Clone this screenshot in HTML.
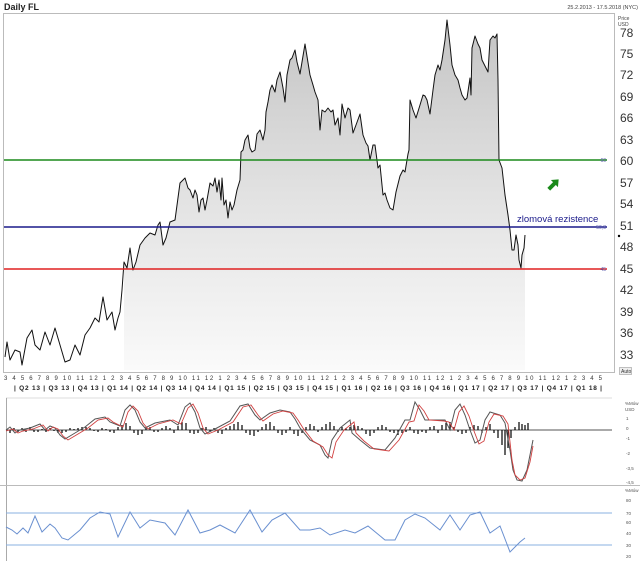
<!DOCTYPE html>
<html><head><meta charset="utf-8"><style>
body{margin:0;width:640px;height:561px;overflow:hidden;background:#fff;font-family:"Liberation Sans",sans-serif}
svg{display:block}
</style></head><body>
<svg width="640" height="561" viewBox="0 0 640 561" xmlns="http://www.w3.org/2000/svg" font-family="Liberation Sans, sans-serif">
<defs>
<linearGradient id="g" x1="0" y1="0" x2="0" y2="1">
<stop offset="0" stop-color="#c4c4c4"/><stop offset="0.5" stop-color="#e2e2e2"/><stop offset="1" stop-color="#fafafa"/>
</linearGradient>
</defs>
<text x="4" y="10" font-size="9" font-weight="bold" fill="#222">Daily FL</text>
<text x="638" y="9" font-size="5.5" fill="#444" text-anchor="end">25.2.2013 - 17.5.2018 (NYC)</text>
<rect x="3.5" y="13.5" width="611" height="359" fill="none" stroke="#bbb"/>
<polygon fill="url(#g)" points="124,262 127,268 130,248 133,270 136,262 140,245 145,238 150,233 155,235 158,225 160,222 163,245 166,238 170,222 175,220 180,183 183,180 185,178 188,188 190,190 193,198 195,190 197,195 199,212 201,200 203,198 205,210 207,200 210,183 213,186 215,178 217,192 219,180 221,200 222,178 224,205 226,200 228,218 230,202 232,210 234,205 237,190 240,180 241,152 243,150 245,140 248,135 250,148 252,152 255,150 257,134 260,130 263,140 265,130 266,112 268,102 270,90 272,85 275,92 277,80 280,72 283,88 285,102 287,75 290,60 292,58 295,50 297,62 300,74 305,44 310,75 313,85 315,92 318,100 320,130 322,110 325,112 328,108 331,112 333,110 335,125 338,118 340,135 342,104 345,118 348,108 350,110 353,133 356,125 360,114 363,135 366,143 368,146 370,160 373,145 375,145 378,168 380,165 383,195 385,193 387,200 390,208 393,210 396,192 400,176 403,170 405,172 408,154 409,150 410,100 413,110 416,118 420,105 423,95 425,96 427,100 430,114 433,90 435,75 438,65 440,70 442,60 445,40 447,20 450,45 452,65 455,75 458,80 460,88 462,95 465,100 467,98 470,78 471,95 472,48 475,36 478,44 480,48 482,60 485,66 488,72 490,40 493,36 495,38 497,34 498,80 499,160 502,168 505,195 508,215 510,230 512,250 514,250 516,235 518,245 519,260 521,268 522,255 524,248 525,235 525,370 124,370"/>
<polyline fill="none" stroke="#111" stroke-width="1" stroke-linejoin="round" points="5,357 7,342 10,360 15,350 20,352 22,365 27,338 32,330 35,345 40,350 45,332 50,345 55,328 60,345 65,362 70,360 75,345 80,355 85,335 90,328 95,318 99,322 103,297 107,320 112,312 115,330 118,318 120,312 122,290 124,262 127,268 130,248 133,270 136,262 140,245 145,238 150,233 155,235 158,225 160,222 163,245 166,238 170,222 175,220 180,183 183,180 185,178 188,188 190,190 193,198 195,190 197,195 199,212 201,200 203,198 205,210 207,200 210,183 213,186 215,178 217,192 219,180 221,200 222,178 224,205 226,200 228,218 230,202 232,210 234,205 237,190 240,180 241,152 243,150 245,140 248,135 250,148 252,152 255,150 257,134 260,130 263,140 265,130 266,112 268,102 270,90 272,85 275,92 277,80 280,72 283,88 285,102 287,75 290,60 292,58 295,50 297,62 300,74 305,44 310,75 313,85 315,92 318,100 320,130 322,110 325,112 328,108 331,112 333,110 335,125 338,118 340,135 342,104 345,118 348,108 350,110 353,133 356,125 360,114 363,135 366,143 368,146 370,160 373,145 375,145 378,168 380,165 383,195 385,193 387,200 390,208 393,210 396,192 400,176 403,170 405,172 408,154 409,150 410,100 413,110 416,118 420,105 423,95 425,96 427,100 430,114 433,90 435,75 438,65 440,70 442,60 445,40 447,20 450,45 452,65 455,75 458,80 460,88 462,95 465,100 467,98 470,78 471,95 472,48 475,36 478,44 480,48 482,60 485,66 488,72 490,40 493,36 495,38 497,34 498,80 499,160 502,168 505,195 508,215 510,230 512,250 514,250 516,235 518,245 519,260 521,268 522,255 524,248 525,235"/>
<line x1="4" y1="160" x2="607" y2="160" stroke="#1a8a1a" stroke-width="1.5"/>
<line x1="4" y1="227" x2="607" y2="227" stroke="#1a1a8a" stroke-width="1.5"/>
<line x1="4" y1="269" x2="607" y2="269" stroke="#e02020" stroke-width="1.5"/>
<text x="606" y="162" font-size="5" fill="#55a" text-anchor="end">60</text>
<text x="606" y="229" font-size="5" fill="#55a" text-anchor="end">50,8</text>
<text x="606" y="271" font-size="5" fill="#55a" text-anchor="end">45</text>
<text x="517" y="222" font-size="9.5" fill="#1a1a8a">zlomová rezistence</text>
<g transform="translate(553,185) rotate(-45)"><rect x="-6" y="-2" width="9" height="4" fill="#1a8a1a"/><polygon points="2,-5 8,0 2,5" fill="#1a8a1a"/></g>
<circle cx="619" cy="236" r="1.2" fill="#000"/>
<text x="618" y="20" font-size="5" fill="#444">Price</text>
<text x="618" y="26" font-size="5" fill="#444">USD</text>
<g font-size="12" fill="#333">
<text x="620" y="37">78</text><text x="620" y="58">75</text><text x="620" y="79">72</text><text x="620" y="101">69</text><text x="620" y="122">66</text><text x="620" y="144">63</text><text x="620" y="165">60</text><text x="620" y="187">57</text><text x="620" y="208">54</text><text x="620" y="230">51</text><text x="620" y="251">48</text><text x="620" y="273">45</text><text x="620" y="294">42</text><text x="620" y="316">39</text><text x="620" y="337">36</text><text x="620" y="359">33</text>
</g>
<rect x="619.5" y="367.5" width="12" height="7" fill="#eee" stroke="#888" stroke-width="0.5"/>
<text x="621" y="373" font-size="5" fill="#333">Auto</text>
<text x="4" y="380" font-size="6" fill="#333" textLength="598" lengthAdjust="spacing">3 4 5 6 7 8 9 10 11 12 1 2 3 4 5 6 7 8 9 10 11 12 1 2 3 4 5 6 7 8 9 10 11 12 1 2 3 4 5 6 7 8 9 10 11 12 1 2 3 4 5 6 7 8 9 10 11 12 1 2 3 4 5</text>
<text x="14" y="390" font-size="6.5" fill="#222" font-weight="bold" textLength="588" lengthAdjust="spacing">|  Q2 13  |  Q3 13  |  Q4 13  |  Q1 14  |  Q2 14  |  Q3 14  |  Q4 14  |  Q1 15  |  Q2 15  |  Q3 15  |  Q4 15  |  Q1 16  |  Q2 16  |  Q3 16  |  Q4 16  |  Q1 17  |  Q2 17  |  Q3 17  |  Q4 17  |  Q1 18  |</text>
<line x1="6" y1="398" x2="612" y2="398" stroke="#ddd"/>
<line x1="6.5" y1="398" x2="6.5" y2="561" stroke="#aaa"/>
<line x1="0" y1="485.5" x2="640" y2="485.5" stroke="#bbb"/>
<line x1="6" y1="430" x2="612" y2="430" stroke="#555" stroke-width="1"/>
<path stroke="#000" stroke-width="1.2" fill="none" d="M10 430v3M14 430v-2M18 430v2M22 430v-2M26 430v2M30 430v-3M34 430v2M38 430v2M42 430v-1M46 430v2M50 430v-2M54 430v1M58 430v3M62 430v3M66 430v2M70 430v-2M74 430v-1M78 430v-2M82 430v-3M86 430v-3M90 430v-2M94 430v1M98 430v2M102 430v-2M106 430v-1M110 430v2M114 430v3M118 430v-3M122 430v-5M126 430v-7M130 430v-4M134 430v3M138 430v5M142 430v4M146 430v-2M150 430v-3M154 430v2M158 430v2M162 430v-2M166 430v-4M170 430v-2M174 430v3M178 430v-4M182 430v-8M186 430v-7M190 430v3M194 430v4M198 430v3M202 430v-2M206 430v-3M210 430v2M214 430v-2M218 430v3M222 430v4M226 430v-2M230 430v-4M234 430v-6M238 430v-8M242 430v-5M246 430v3M250 430v5M254 430v6M258 430v2M262 430v-3M266 430v-6M270 430v-8M274 430v-4M278 430v3M282 430v5M286 430v3M290 430v-3M294 430v4M298 430v6M302 430v3M306 430v-3M310 430v-6M314 430v-4M318 430v2M322 430v-3M326 430v-6M330 430v-8M334 430v-4M338 430v2M342 430v-3M346 430v-2M350 430v-3M354 430v-5M358 430v-4M362 430v-2M366 430v4M370 430v6M374 430v3M378 430v-3M382 430v-5M386 430v-3M390 430v2M394 430v3M398 430v5M402 430v3M406 430v2M410 430v-3M414 430v3M418 430v4M422 430v2M426 430v3M430 430v-3M434 430v-4M438 430v3M442 430v-5M446 430v-7M450 430v-8M454 430v-3M458 430v2M462 430v4M466 430v3M470 430v-3M474 430v-5M478 430v-4M482 430v3M486 430v-3M490 430v-6M494 430v3M498 430v8M502 430v15M505 430v25M508 430v18M511 430v8M515 430v-3M519 430v-8M522 430v-6M525 430v-5M528 430v-7"/>
<polyline fill="none" stroke="#555" stroke-width="1" points="6,430 10,427 15,433 20,430 30,428 40,424 45,430 50,426 55,428 60,435 65,439 75,433 85,427 95,419 105,417 110,422 120,426 125,410 130,405 135,410 140,422 145,428 155,423 170,420 178,425 185,407 190,403 195,412 200,428 205,434 215,429 230,421 240,406 248,404 255,415 260,420 270,413 280,410 290,412 295,419 300,428 310,440 320,445 325,455 328,458 332,440 340,428 350,420 352,433 360,440 370,448 385,450 395,438 405,420 410,420 415,402 420,410 425,420 440,420 445,420 450,430 455,410 460,404 465,415 470,430 475,443 480,440 485,420 490,412 500,415 505,423 510,450 513,470 517,480 522,481 527,470 530,455 533,440"/>
<polyline fill="none" stroke="#d04040" stroke-width="0.9" points="6,431 13,429 18,433 23,431 33,429 43,425 48,431 53,427 58,429 63,436 68,440 78,434 88,428 98,420 108,418 113,422 123,427 128,412 133,406 138,411 143,423 148,429 158,424 173,420 181,424 188,408 193,404 198,413 203,428 208,434 218,430 233,422 243,407 251,405 258,415 263,421 273,414 283,411 293,413 298,420 303,428 313,441 323,447 328,455 332,458 336,442 344,430 354,422 356,433 364,441 374,449 389,451 399,440 409,422 414,421 419,405 424,411 429,420 444,421 449,422 454,430 459,412 464,406 469,416 474,431 479,444 484,441 489,422 494,414 503,416 508,424 512,460 515,475 520,480 525,478 530,462 533,446"/>
<g font-size="4.5" fill="#555"><text x="625" y="405">%Mów</text><text x="625" y="411">USD</text><text x="626" y="420">1</text><text x="626" y="430">0</text><text x="626" y="440">-1</text><text x="626" y="455">-2</text><text x="626" y="470">-3,5</text><text x="626" y="484">-4,5</text></g>
<line x1="6" y1="513" x2="612" y2="513" stroke="#8ab0e0" stroke-width="1"/>
<line x1="6" y1="545" x2="612" y2="545" stroke="#8ab0e0" stroke-width="1"/>
<polyline fill="none" stroke="#6a90d0" stroke-width="1" points="6,527 12,530 17,534 23,528 28,533 35,516 42,532 50,524 55,528 62,538 68,540 80,530 90,518 100,512 110,514 118,537 130,512 140,528 150,520 165,523 175,535 188,510 200,533 210,530 220,525 235,533 250,510 262,532 272,520 285,513 300,530 310,530 320,528 330,535 345,530 355,533 368,526 385,540 395,540 405,520 415,514 425,518 440,530 450,515 460,530 470,515 480,512 490,533 500,526 510,552 520,542 525,538"/>
<g font-size="4.5" fill="#555"><text x="625" y="492">%Mów</text><text x="626" y="502">80</text><text x="626" y="515">70</text><text x="626" y="524">60</text><text x="626" y="535">40</text><text x="626" y="547">30</text><text x="626" y="558">20</text></g>
</svg>
</body></html>
